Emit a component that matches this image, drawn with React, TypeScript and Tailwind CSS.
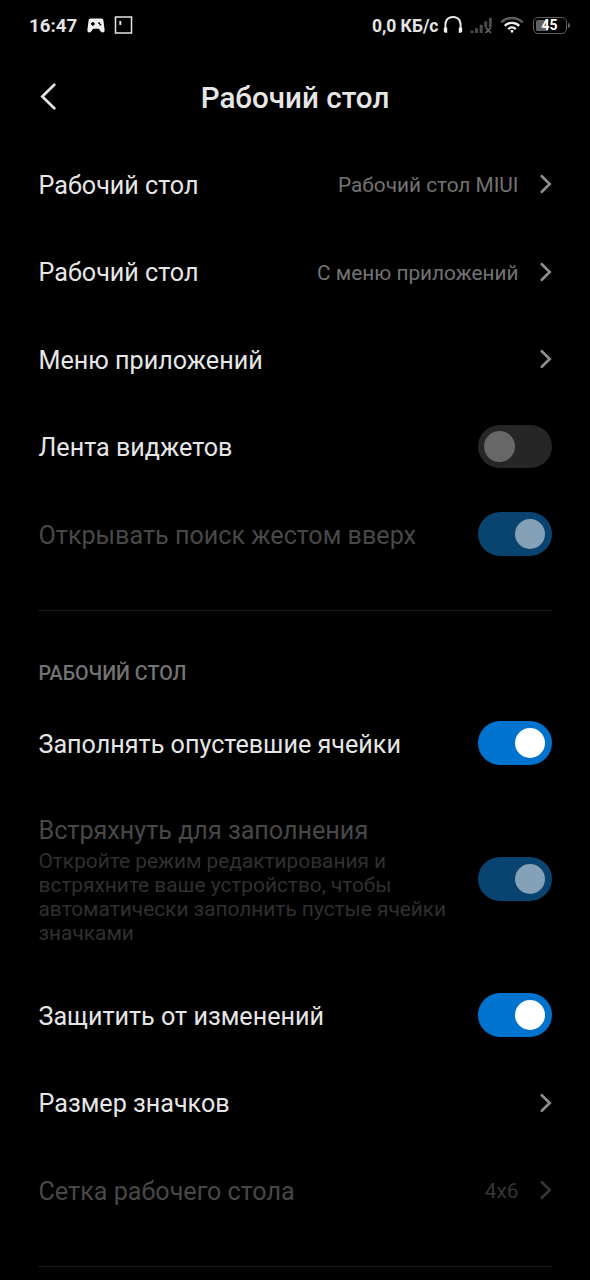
import { useState, type ReactNode } from "react";

function Chevron({ dim = false }: { dim?: boolean }) {
  return (
    <svg className={`ml-[20.5px] h-[22px] w-[13px] shrink-0 ${dim ? "text-[#363636]" : "text-[#8c8c8c]"}`} viewBox="0 0 13 22" fill="none" stroke="currentColor" strokeWidth="2.7" strokeLinecap="round" strokeLinejoin="miter">
      <path d="M2.8 3.2 10.7 11 2.8 18.8" />
    </svg>
  );
}

function Toggle({ initial, disabled = false }: { initial: boolean; disabled?: boolean }) {
  const [on, setOn] = useState(initial);
  const track = on ? (disabled ? "bg-[#09436f]" : "bg-[#0073cf]") : "bg-[#262626]";
  const knob = on ? (disabled ? "bg-[#84a1b8]" : "bg-white") : "bg-[#676767]";
  return (
    <button
      type="button"
      role="switch"
      aria-checked={on}
      disabled={disabled}
      onClick={() => setOn(!on)}
      className={`flex h-[43.5px] w-[74px] shrink-0 items-center rounded-full pr-[7px] pl-[6px] ${on ? "justify-end" : "justify-start"} ${track}`}
    >
      <span className={`size-[30.5px] rounded-full ${knob}`} />
    </button>
  );
}

type RowProps = { label: string; value?: string; dim?: boolean; children: ReactNode };

function Row({ label, value, dim = false, children }: RowProps) {
  return (
    <div className="flex h-[87.5px] items-center">
      <span className={`grow pt-[3px] pl-[0.5px] text-[25.15px] leading-[30px] whitespace-nowrap ${dim ? "text-[#484848]" : "text-[#e6e6e6]"}`}>{label}</span>
      {value && <span className={`pt-[2px] text-[20.8px] leading-[24px] whitespace-nowrap ${dim ? "text-[#363636]" : "text-[#737373]"}`}>{value}</span>}
      {children}
    </div>
  );
}

function StatusBar() {
  return (
    <div className="flex h-[50px] items-center pr-[20px] pl-[29px] font-bold text-[#e4e4e4]">
      <span className="w-[58px] pt-px text-[18.7px] leading-[22px]">16:47</span>
      <svg className="h-[15px] w-[18px]" viewBox="0 0 18 15">
        <path fill="#f2f2f2" fillRule="evenodd" d="M3.800.6h10.400c1.300 0 2.100.7 2.200 1.900l1.200 9.200c.2 1.700-.6 2.700-2 2.700-.7 0-1.300-.3-1.700-.9L11.800 10.800H6.200L4.100 13.500c-.4.6-1 .9-1.700.9-1.400 0-2.200-1-2-2.700L1.600 2.500C1.700 1.300 2.500.6 3.800.6ZM5 4v1H4v1.800h1v1h1.700v-1h1V5h-1V4Zm6.300.2v1.700h1.200v1.500h1.700V5.700H13V4.200Z" />
      </svg>
      <svg className="ml-[9px] h-[18px] w-[19px]" viewBox="0 0 19 18" fill="none">
        <rect x="1.500" y="1" width="16" height="16" stroke="#e6e6e6" strokeWidth="1.500" />
        <path d="M6.300 5v4" stroke="#e0e0e0" strokeWidth="2" />
      </svg>
      <div className="grow" />
      <span className="pt-px text-[17.5px] leading-[22px] whitespace-nowrap">0,0 КБ/с</span>
      <svg className="ml-[4px] h-[20px] w-[20px]" viewBox="0 0 20 20" fill="none">
        <path d="M2.800 15C1.300 6 4.200 2 10 2s8.700 4 7.200 13" stroke="#e8e8e8" strokeWidth="2" />
        <path d="M.8 12.800h3.400v5H2.300C1.200 17.800.8 16.500.8 15.200ZM19.200 12.800h-3.400v5h1.900c1.100 0 1.500-1.300 1.500-2.600Z" fill="#f4f4f4" />
      </svg>
      <svg className="ml-[7px] h-[17px] w-[23px]" viewBox="0 0 23 17">
        <path fill="#4c4c4c" d="M.5 13.500h2.900V16H.5Zm4.600-2.300H8V16H5.100Zm4.600-3.500h2.900V16H9.700Zm4.600-3.500h2.900V10h-2.900ZM18.900 1h2.900v9h-2.900Z" />
        <path d="m15.500 10.500 5.500 5.500m0-5.500-5.500 5.500" stroke="#666" strokeWidth="1.700" />
      </svg>
      <svg className="ml-[7px] h-[18px] w-[24px]" viewBox="0 0 24 18" fill="none">
        <path d="M1.300 6.300a15.300 15.300 0 0 1 21.400 0" stroke="#5c5c5c" strokeWidth="2.500" />
        <path d="M4.800 9.800a10.300 10.300 0 0 1 14.400 0M8.200 13.100a5.400 5.400 0 0 1 7.600 0" stroke="#ededed" strokeWidth="2.400" />
        <path d="M12 14a2.300 2.300 0 0 1 1.800.8L12 17.200l-1.800-2.400A2.300 2.300 0 0 1 12 14Z" fill="#fff" />
      </svg>
      <div className="ml-[9px] flex items-center">
        <div className="flex h-[17px] w-[34px] items-center justify-center rounded-[5px] border-[1.500px] border-[#606060] bg-[linear-gradient(to_right,#606060_45%,transparent_45%)] bg-clip-content p-[1.500px]">
          <span className="text-[14px] leading-[14px] text-white">45</span>
        </div>
        <div className="ml-[1.500px] h-[5px] w-[2px] rounded-r-full bg-[#606060]" />
      </div>
    </div>
  );
}

export default function App() {
  return (
    <div className="h-[1280px] w-[590px] overflow-hidden bg-black font-['Roboto',sans-serif]">
      <StatusBar />
      <header className="grid h-[90.250px] grid-cols-[60px_1fr_60px] items-center px-[38px]">
        <svg className="h-[30px] w-[20px]" viewBox="0 0 20 30" fill="none" stroke="#e4e4e4" strokeWidth="2.700" strokeLinecap="round" strokeLinejoin="miter">
          <path d="M16.300 4.700 4.300 16.500 16.300 28.300" />
        </svg>
        <h1 className="pt-[5px] text-center text-[29.600px] leading-[36px] font-medium whitespace-nowrap text-[#e6e6e6]">Рабочий стол</h1>
      </header>
      <main className="px-[38px]">
        <Row label="Рабочий стол" value="Рабочий стол MIUI"><Chevron /></Row>
        <Row label="Рабочий стол" value="С меню приложений"><Chevron /></Row>
        <Row label="Меню приложений"><Chevron /></Row>
        <Row label="Лента виджетов"><Toggle initial={false} /></Row>
        <Row label="Открывать поиск жестом вверх" dim><Toggle initial disabled /></Row>
        <div className="mt-[32px] h-px bg-[#1b1b1b]" />
        <h2 className="mt-[51px] mb-[13.500px] pl-[0.5px] text-[19.700px] leading-[24px] font-medium text-[#737373]">РАБОЧИЙ СТОЛ</h2>
        <Row label="Заполнять опустевшие ячейки"><Toggle initial /></Row>
        <div className="flex h-[184.500px] items-center justify-between">
          <div className="w-[420px] pt-[2px] pl-[0.5px]">
            <div className="text-[25.150px] leading-[30px] text-[#484848]">Встряхнуть для заполнения</div>
            <p className="mt-[3px] text-[20.850px] leading-[24px] text-[#303030]">
              Откройте режим редактирования и встряхните ваше устройство, чтобы автоматически заполнить пустые ячейки значками
            </p>
          </div>
          <Toggle initial disabled />
        </div>
        <Row label="Защитить от изменений"><Toggle initial /></Row>
        <Row label="Размер значков"><Chevron /></Row>
        <Row label="Сетка рабочего стола" value="4x6" dim><Chevron dim /></Row>
        <div className="mt-[32px] h-px bg-[#1b1b1b]" />
      </main>
    </div>
  );
}
